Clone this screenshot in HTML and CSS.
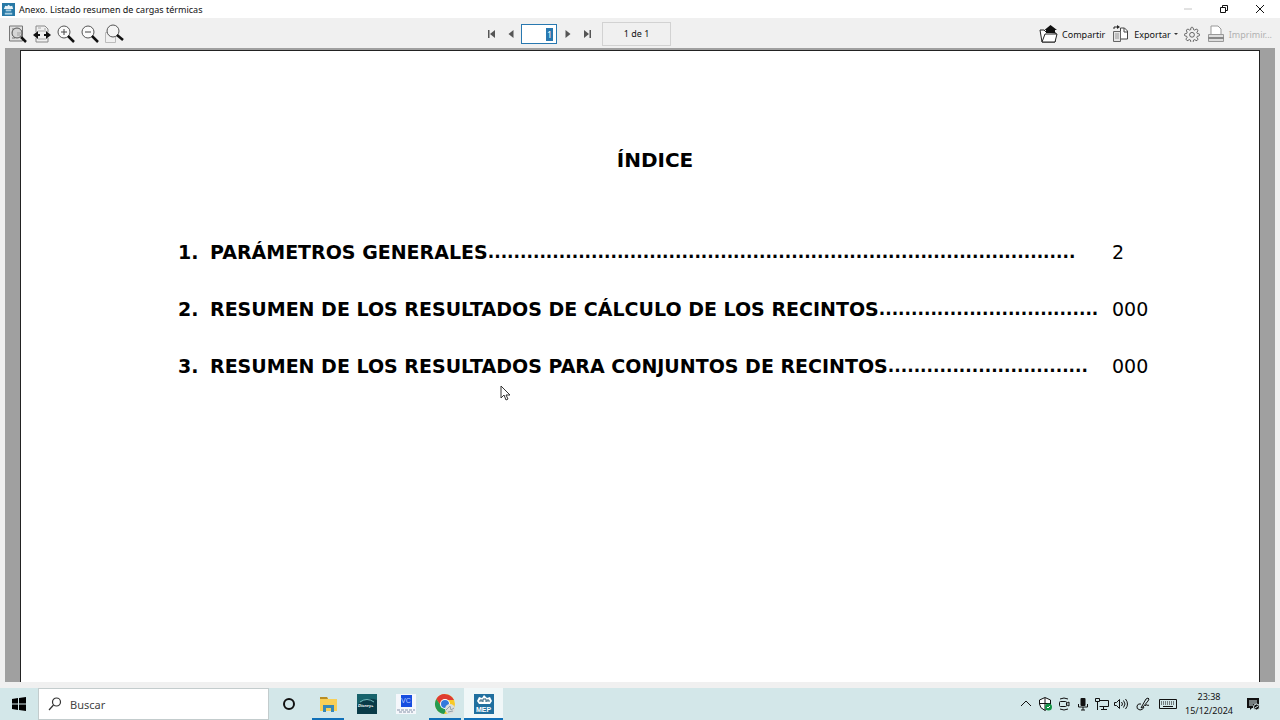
FILE: index.html
```html
<!DOCTYPE html>
<html lang="es">
<head>
    <meta charset="UTF-8">
    <meta name="viewport" content="width=device-width, initial-scale=1.0">
    <title>Anexo. Listado resumen de cargas térmicas</title>
    <link rel="stylesheet" href="styles.css">
</head>
<body>
    <header class="titlebar">
        <svg class="app-icon" viewBox="0 0 14 14"><rect width="14" height="14" fill="#2879a6"/><path d="M2 6.500 3.500 3 5.500 3.500 7 2l2 1.500 2-.5L12 6.500z" fill="#e8f3f8"/><path d="M4 7h6v2H4z" fill="#a9cfe2"/><path d="M3 11.500h8" stroke="#a9cfe2" stroke-width="2"/></svg>
        <h1 class="window-title">Anexo. Listado resumen de cargas térmicas</h1>
        <div class="window-buttons">
            <button aria-label="Minimizar"><svg viewBox="0 0 10 10"><path d="M1 5h8" stroke="#c4c4c4"/></svg></button>
            <button aria-label="Restaurar"><svg viewBox="0 0 10 10" fill="none" stroke="#111"><path d="M1.500 3.500h5v5h-5zM3.500 3V1.500h5v5H7"/></svg></button>
            <button aria-label="Cerrar"><svg viewBox="0 0 10 10"><path d="m1 1 8 8M9 1 1 9" stroke="#111"/></svg></button>
        </div>
    </header>

    <div class="toolbar">
        <div class="tools">
            <button aria-label="Página completa"><svg viewBox="0 0 20 20" fill="none"><path d="M1.500 2h13v15h-13z" stroke="#777" fill="#e0e0e0"/><path d="M4 5h2M4 8h1M4 11h1M4 14h3M9 9h4M9 11h3" stroke="#777"/><circle cx="9" cy="9" r="5" stroke="#555" fill="#ccc" fill-opacity=".5"/><path d="m13 13 5 5" stroke="#111" stroke-width="2.500"/></svg></button>
            <button aria-label="Ancho de página"><svg viewBox="0 0 20 20" fill="none"><path d="M4 8V2h9l3 3v3M4 14v4h12v-4" stroke="#888"/><path d="M6 4h3M12 5h2M6 7h8M6 15h8" stroke="#aaa"/><path d="m1 11 5-4v3h2v2H6v3zM19 11l-5-4v3h-2v2h2v3z" fill="#111"/></svg></button>
            <button aria-label="Acercar"><svg viewBox="0 0 20 20" fill="none"><circle cx="8" cy="8" r="6" stroke="#555" fill="#fafafa"/><path d="M5 8h6M8 5v6" stroke="#444"/><path d="m12 12 6 6" stroke="#111" stroke-width="2.500"/></svg></button>
            <button aria-label="Alejar"><svg viewBox="0 0 20 20" fill="none"><circle cx="8" cy="8" r="6" stroke="#555" fill="#fafafa"/><path d="M5 8h6" stroke="#444"/><path d="m12 12 6 6" stroke="#111" stroke-width="2.500"/></svg></button>
            <button aria-label="Zoom de área"><svg viewBox="0 0 20 20" fill="none"><path d="M1.500 8.500h10v10h-10z" stroke="#bbb"/><circle cx="9" cy="7" r="6" stroke="#555" fill="#f4f4f4"/><path d="m13 11 6 5" stroke="#111" stroke-width="2.500"/></svg></button>
        </div>

        <div class="pager">
            <button aria-label="Primera página"><svg viewBox="0 0 10 10" fill="#555"><path d="M1 1h1.500v8H1zM8 1v8L3 5z"/></svg></button>
            <button aria-label="Página anterior"><svg viewBox="0 0 10 10" fill="#555"><path d="M7.500 1v8l-5-4z"/></svg></button>
            <div class="page-number">
                <input type="text" value="1" aria-label="Página">
            </div>
            <button aria-label="Página siguiente"><svg viewBox="0 0 10 10" fill="#555"><path d="M2.500 1v8l5-4z"/></svg></button>
            <button aria-label="Última página"><svg viewBox="0 0 10 10" fill="#555"><path d="M7.500 1H9v8H7.500zM2 1v8l5-4z"/></svg></button>
            <output class="page-count">1 de 1</output>
        </div>

        <div class="actions">
            <button><svg viewBox="0 0 20 20"><path d="M3 18 1 6h4l2 2 10 1-1 9z" fill="#fff" stroke="#222"/><path d="m3 18 3-8h12l-2 8z" fill="#fff" stroke="#222"/><path d="M7 9V6H5.500L11.500 1 18 6h-2v3z" fill="#111"/></svg>Compartir</button>
            <button><svg viewBox="0 0 20 20" fill="none"><path d="M9.500 4h4l3 3v8h-7z" fill="#fff" stroke="#444"/><path d="M13 4v4h4" stroke="#444"/><path d="M2.500 7.500h7v10h-7z" fill="#e5e5e5" stroke="#666"/><path d="M4 10h4M4 12h4M4 14h4" stroke="#999"/><path d="M3 5V3h4" stroke="#222"/><path d="m6 1 3 2-3 2z" fill="#222"/></svg>Exportar<span class="caret"></span></button>
            <button aria-label="Configuración"><svg class="gear" viewBox="0 0 20 20" fill="none" stroke="#444"><path d="m8.500 2.500 1-1h1l1 1 .4 2 1.500.6 1.800-1.100 1.300.1.700.7.100 1.300-1.200 1.800.6 1.500 2 .4 1 .7v1l-1 .9-2 .4-.6 1.500 1.200 1.800-.1 1.200-.8.800-1.300.1-1.700-1.200-1.500.6-.4 2-1 1h-1l-1-1-.4-2-1.500-.6-1.800 1.200-1.200-.1-.8-.8-.1-1.300 1.200-1.700-.6-1.500-2-.4-1-1v-1l1-.7 2-.4.6-1.500L3.100 6.100l.1-1.200.8-.8 1.200-.1L7 5.100l1.500-.6z"/><circle cx="10" cy="11" r="3"/></svg></button>
            <button disabled><svg viewBox="0 0 20 20" fill="none" stroke="#999"><path d="M5 10V2h7l3 3v5" fill="#fff"/><path d="M2.500 10.500h15v7h-15z" fill="#ddd"/><path d="M2 14h16" stroke="#888" stroke-width="2"/></svg>Imprimir...</button>
        </div>
    </div>

    <main class="viewer">
        <article class="sheet">
            <h2>ÍNDICE</h2>
            <ol class="index">
                <li><span class="num">1.</span><span class="entry">PARÁMETROS GENERALES</span><span class="dots">...........................................................................................</span><span class="page">2</span></li>
                <li><span class="num">2.</span><span class="entry">RESUMEN DE LOS RESULTADOS DE CÁLCULO DE LOS RECINTOS</span><span class="dots">..................................</span><span class="page">000</span></li>
                <li><span class="num">3.</span><span class="entry">RESUMEN DE LOS RESULTADOS PARA CONJUNTOS DE RECINTOS</span><span class="dots">...............................</span><span class="page">000</span></li>
            </ol>
        </article>
    </main>

    <footer class="taskbar">
        <button class="start" aria-label="Inicio"><svg viewBox="0 0 14 14"><path d="m0 2 6-1v5.500H0zM7 .9 14 0v6.500H7zM0 7.500h6V13l-6-1zM7 7.500h7V14l-7-.9z" fill="#000"/></svg></button>
        <label class="search">
            <svg viewBox="0 0 14 14" fill="none" stroke="#333" stroke-width="1.200"><circle cx="8.500" cy="5" r="4"/><path d="M5.500 8 1 13"/></svg>
            <input type="text" placeholder="Buscar" aria-label="Buscar">
        </label>
        <nav class="apps">
            <button aria-label="Cortana"><svg viewBox="0 0 22 22"><circle cx="11" cy="11" r="5" fill="none" stroke="#111" stroke-width="2"/></svg></button>
            <button class="open" aria-label="Explorador"><svg viewBox="0 0 22 22"><path d="M3 4h7l1 2h9v12H3z" fill="#f8cf57"/><path d="M3 4h7l1 2H3z" fill="#b98d24"/><path d="M6 19v-7h11v7h-3v-4H9v4z" fill="#3688b8"/></svg></button>
            <button aria-label="Disney+"><svg viewBox="0 0 22 22"><rect x="1" y="1" width="20" height="20" fill="#093b48"/><path d="M1 1h20v6Q10 3 1 12z" fill="#17636c"/><path d="M4 9q7-5 14 0" fill="none" stroke="#8ed8d8" stroke-width=".8"/><text x="2" y="14" font-size="4" font-style="italic" font-weight="700" fill="#fff">Disney+</text></svg></button>
            <button aria-label="VC"><svg viewBox="0 0 22 22"><path d="M1 1h20v20H1z" fill="#f5f7fb"/><path d="M6 2h11v12H6z" fill="#174ee0"/><text x="6" y="10" font-size="7" fill="#b9ccff">VC</text><path d="M2 17h18M4 19h14" stroke="#8794aa" stroke-dasharray="3 1"/></svg></button>
            <button class="open" aria-label="Chrome"><svg viewBox="0 0 22 22"><circle cx="11" cy="11" r="10" fill="#f8c927"/><path d="M2.300 6A10 10 0 0 1 20 7h-9l-4 6z" fill="#df3c31"/><path d="M2.300 6A10 10 0 0 0 10 21l4-7-7-1z" fill="#259a50"/><circle cx="11" cy="11" r="5" fill="#fff"/><circle cx="11" cy="11" r="4" fill="#3379dc"/><circle cx="16" cy="16" r="5" fill="#dcdedc"/><path d="m12 17 4-4 1 4 3-2M14 19l5-1" stroke="#90a2aa" fill="none"/></svg></button>
            <button class="open active" aria-label="MEP"><svg viewBox="0 0 22 22"><rect x="1" y="1" width="20" height="20" fill="#206f9f"/><path d="m4 8 2-4 3 1 2-3 3 3 3-1 2 4-2 3H6z" fill="#fff"/><path d="M7 9V7h2v2M10 9V6h3v3M14 9V7h2v2" fill="none" stroke="#285d79"/><text x="3" y="19" font-size="7" font-weight="700" fill="#fff">MEP</text></svg></button>
        </nav>
        <div class="tray">
            <button aria-label="Iconos ocultos"><svg viewBox="0 0 14 14" fill="none" stroke="#111"><path d="m2 9 5-5 5 5"/></svg></button>
            <button aria-label="Seguridad"><svg viewBox="0 0 14 14"><path d="M7 .5 12.500 3v4q0 4-5.500 6.500Q1.500 11 1.500 7V3z" fill="#fff" stroke="#111"/><path d="M7 1v12M2 6.500h10" stroke="#111"/><circle cx="10.500" cy="10" r="3.500" fill="#169447"/><path d="m9 10 1 1 2-2" fill="none" stroke="#fff"/></svg></button>
            <button aria-label="Cámara"><svg viewBox="0 0 14 14" fill="none" stroke="#111"><rect x="2.500" y="4.500" width="7" height="5" rx="1"/><path d="m10 6 2-1v4l-2-1M3 2q4-2 8 0M3 12q4 2 8 0"/></svg></button>
            <button aria-label="Micrófono"><svg viewBox="0 0 14 14"><rect x="4.500" y="1" width="5" height="8" rx="1" fill="#111"/><path d="M2.500 7v3h9V7M7 10v3M5 13h4" fill="none" stroke="#111"/></svg></button>
            <button aria-label="Red"><svg viewBox="0 0 14 14" fill="none" stroke="#111"><path d="M4.500 3.500h9v6h-9M8.500 10v3M6 12.500h6M.5 1.500h4v3h-4zM2.500 5v8"/></svg></button>
            <button class="sound" aria-label="Volumen"><svg viewBox="0 0 14 14" fill="none" stroke="#111"><path d="M.5 5.500h2l3-3v9l-3-3h-2zM7.500 5q2 2 0 4M9.500 3.500q3 3.500 0 7M11.500 2q4 5 0 10"/></svg></button>
            <button class="pen" aria-label="Lápiz"><svg viewBox="0 0 14 14" fill="none" stroke="#111"><path d="m6 9 4-7 2-1 1 1-1 2-5 6-2 1zM5 7Q2 6 1 9t3 4q3 0 4-3M9 9q1-2 2-1t2 0"/></svg></button>
            <button class="keyboard" aria-label="Teclado"><svg viewBox="0 0 20 14" fill="none" stroke="#111"><path d="M1.500 2.500h17v9h-17z"/><path d="M3 5h14M3 7h14" stroke-dasharray="1 1"/><path d="M5 9.500h10"/></svg></button>
            <time class="clock" datetime="2024-12-15T23:38"><span>23:38</span><span>15/12/2024</span></time>
            <button class="notices" aria-label="Notificaciones"><svg viewBox="0 0 14 14"><path d="M1 1h12v10H6l-2 2v-2H1z" fill="#111"/><path d="M3 4h8M3 6h8M3 8h4" stroke="#dcebed"/><circle cx="10.500" cy="10" r="3" fill="#111" stroke="#dcebed"/><path d="m9 11 3-2" stroke="#dcebed"/></svg></button>
        </div>
    </footer>

    <svg class="cursor" viewBox="0 0 10 16"><path d="M1 1v12l3-3 2 5 2-1-2-4h4z" fill="#fff" stroke="#333"/></svg>
</body>
</html>
```

FILE: styles.css
```css
* {
    box-sizing: border-box;
}
body {
    margin: 0;
    height: 100vh;
    display: flex;
    flex-direction: column;
    overflow: hidden;
    background: #f0f0f0;
    color: #111;
    font-family: "Noto Sans", "Open Sans", sans-serif;
    font-size: 9px;
}
button {
    display: flex;
    align-items: center;
    justify-content: center;
    padding: 0;
    border: 0;
    background: none;
    color: inherit;
    font: inherit;
}
input {
    font: inherit;
    color: inherit;
}
svg {
    display: block;
    flex: none;
}

.titlebar {
    display: flex;
    align-items: center;
    height: 18px;
    padding-left: 2px;
    background: #fff;
}
.app-icon {
    width: 13px;
    height: 13px;
}
.window-title {
    margin: 0 auto 0 4px;
    font-size: 9px;
    font-weight: 400;
}
.window-buttons {
    display: flex;
    padding-right: 2px;
}
.window-buttons button {
    width: 36px;
    height: 18px;
}
.window-buttons svg {
    width: 10px;
    height: 10px;
}

.toolbar {
    display: flex;
    align-items: center;
    justify-content: space-between;
    height: 30px;
    padding: 2px 8px 0;
}
.tools,
.pager,
.actions {
    display: flex;
    align-items: center;
}
.tools {
    gap: 4px;
}
.tools svg,
.actions svg {
    width: 20px;
    height: 20px;
}
.pager {
    margin-right: 10px;
}
.pager button {
    width: 19px;
    height: 20px;
}
.pager svg {
    width: 10px;
    height: 10px;
}
.page-number {
    display: flex;
    width: 36px;
    height: 20px;
    margin: 0 1px;
}
.page-number input {
    width: 100%;
    padding: 0 4px;
    border: 1px solid #2878b0;
    background: linear-gradient(#2878b0, #2878b0) right 3px center / 7px 13px no-repeat #fff;
    color: #fff;
    text-align: right;
    outline: none;
}
.page-count {
    width: 69px;
    height: 24px;
    margin-left: 6px;
    border: 1px solid #d2d2d2;
    line-height: 22px;
    text-align: center;
}
.actions {
    gap: 6px;
}
.actions button {
    gap: 3px;
}
.actions button:disabled {
    color: #b0b0b0;
}
.actions .gear {
    width: 16px;
    height: 16px;
}
.caret {
    border: 2px solid transparent;
    border-top-color: #333;
    border-bottom: 0;
}

.viewer {
    display: flex;
    flex: 1;
    min-height: 0;
    margin: 0 5px 6px;
    padding: 2px 15px 0;
    background: #a0a0a0;
}
.sheet {
    flex: 1;
    padding: 97px 111px 0 157px;
    border: 1px solid #222;
    border-bottom: 0;
    background: #fff;
    color: #000;
    font-family: "DejaVu Sans", Verdana, sans-serif;
    font-size: 19px;
    line-height: 24px;
}
.sheet h2 {
    margin: 0 0 68px;
    padding-right: 16px;
    font-size: 20px;
    text-align: center;
}
.index {
    display: grid;
    gap: 33px;
    margin: 0;
    padding: 0;
    list-style: none;
}
.index li {
    display: flex;
    font-weight: 700;
    white-space: nowrap;
}
.num {
    width: 32px;
}
.dots {
    font-size: 17px;
}
.page {
    width: 36px;
    margin-left: auto;
    font-weight: 400;
}

.taskbar {
    display: flex;
    height: 32px;
    background: #d3e7e9;
}
.start {
    width: 38px;
}
.start svg {
    width: 14px;
    height: 14px;
}
.search {
    display: flex;
    align-items: center;
    gap: 8px;
    width: 231px;
    padding-left: 9px;
    border: 1px solid #c3cccd;
    background: #fff;
}
.search svg {
    width: 14px;
    height: 14px;
}
.search input {
    min-width: 0;
    flex: 1;
    padding: 0;
    border: 0;
    font-size: 11px;
    outline: none;
}
.search input::placeholder {
    color: #444;
}
.apps {
    display: flex;
    font-family: "Liberation Sans", sans-serif;
}
.apps button {
    width: 39px;
    position: relative;
}
.apps svg {
    width: 22px;
    height: 22px;
}
.open::after {
    content: "";
    position: absolute;
    bottom: 0;
    left: 4px;
    right: 3px;
    height: 2px;
    background: #1070b8;
}
.active {
    background: #f0f7f8;
}
.active::after {
    left: 0;
    right: 0;
}
.tray {
    display: flex;
    align-items: center;
    margin-left: auto;
    padding-right: 11px;
}
.tray button {
    width: 19px;
    height: 32px;
}
.tray svg {
    width: 14px;
    height: 14px;
}
.tray .pen {
    width: 25px;
}
.tray .keyboard {
    width: 26px;
}
.tray .keyboard svg {
    width: 20px;
}
.clock {
    display: grid;
    width: 56px;
    line-height: 14px;
    text-align: center;
}
.tray .notices {
    width: 32px;
}

.cursor {
    position: absolute;
    top: 385px;
    left: 500px;
    width: 10px;
    height: 16px;
}
```
